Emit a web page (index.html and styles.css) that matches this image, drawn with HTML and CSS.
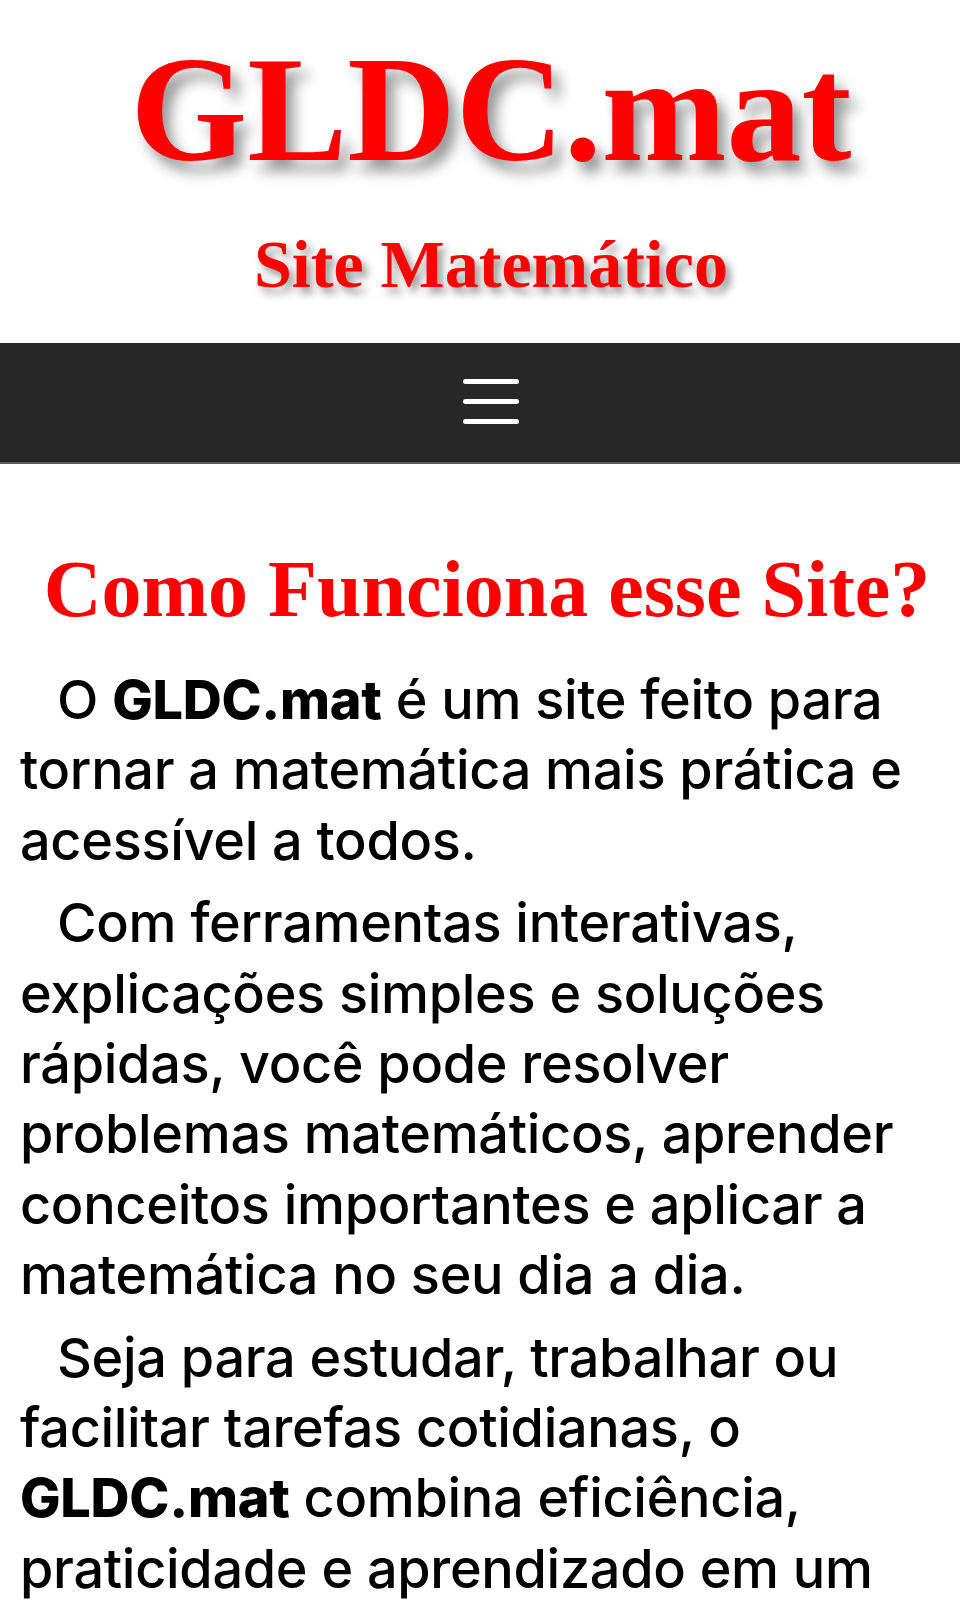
FILE: index.html
```html
<!DOCTYPE html>
<html lang="pt-BR">
<head>
<meta charset="utf-8">
<title>GLDC.mat - Site Matemático</title>
<link rel="stylesheet" href="styles.css">
</head>
<body>
<header class="site-header">
  <h1 class="logo">GLDC.mat</h1>
  <p class="tagline">Site Matemático</p>
</header>
<nav class="navbar">
  <button class="menu-toggle" aria-label="Menu">
    <span class="bar"></span>
    <span class="bar"></span>
    <span class="bar"></span>
  </button>
</nav>
<main class="content">
  <h2 class="section-title">Como Funciona esse Site?</h2>
  <p class="text">O <strong>GLDC.mat</strong> é um site feito para tornar a matemática mais prática e acessível a todos.</p>
  <p class="text">Com ferramentas interativas, explicações simples e soluções rápidas, você pode resolver problemas matemáticos, aprender conceitos importantes e aplicar a matemática no seu dia a dia.</p>
  <p class="text">Seja para estudar, trabalhar ou facilitar tarefas cotidianas, o <strong>GLDC.mat</strong> combina eficiência, praticidade e aprendizado em um único lugar.</p>
</main>
</body>
</html>
```
FILE: styles.css
```css
* { box-sizing: border-box; }
html, body { margin: 0; padding: 0; background: #ffffff; }
body { font-family: Inter, "Noto Sans", sans-serif; color: #000; }

.site-header {
  padding: 34px 0 45px 22px;
  text-align: center;
}
.logo {
  margin: 0;
  font-family: "Liberation Serif", "Times New Roman", serif;
  font-weight: bold;
  font-size: 150px;
  line-height: 150px;
  color: #ff0000;
  text-shadow: 8px 11px 14px rgba(0, 0, 0, 0.42);
}
.tagline {
  margin: 47px 0 0 0;
  font-family: "Liberation Serif", "Times New Roman", serif;
  font-weight: bold;
  font-size: 68px;
  line-height: 67px;
  color: #ff0000;
  text-shadow: 5px 6px 8px rgba(0, 0, 0, 0.42);
}

.navbar {
  height: 121px;
  background: #282727;
  border-bottom: 2px solid #5a5a5a;
  display: flex;
  align-items: center;
  justify-content: center;
  padding-left: 22px;
}
.menu-toggle {
  background: none;
  border: 0;
  padding: 0;
  width: 56px;
  display: flex;
  flex-direction: column;
  gap: 15px;
  margin-top: -3px;
}
.bar {
  display: block;
  height: 5px;
  width: 56px;
  border-radius: 3px;
  background: #ffffff;
}

.content {
  padding: 85px 20px 0 20px;
}
.section-title {
  margin: 0 0 36px 0;
  font-family: "Liberation Serif", "Times New Roman", serif;
  font-weight: bold;
  font-size: 80px;
  line-height: 80px;
  color: #ff0000;
  text-align: center;
  padding-left: 14px;
  white-space: nowrap;
}
.text {
  margin: 0 0 12px 0;
  font-size: 54px;
  line-height: 70.4px;
  font-weight: 500;
  letter-spacing: -0.3px;
  text-indent: 37px;
}
.text strong { font-weight: 800; }
```
